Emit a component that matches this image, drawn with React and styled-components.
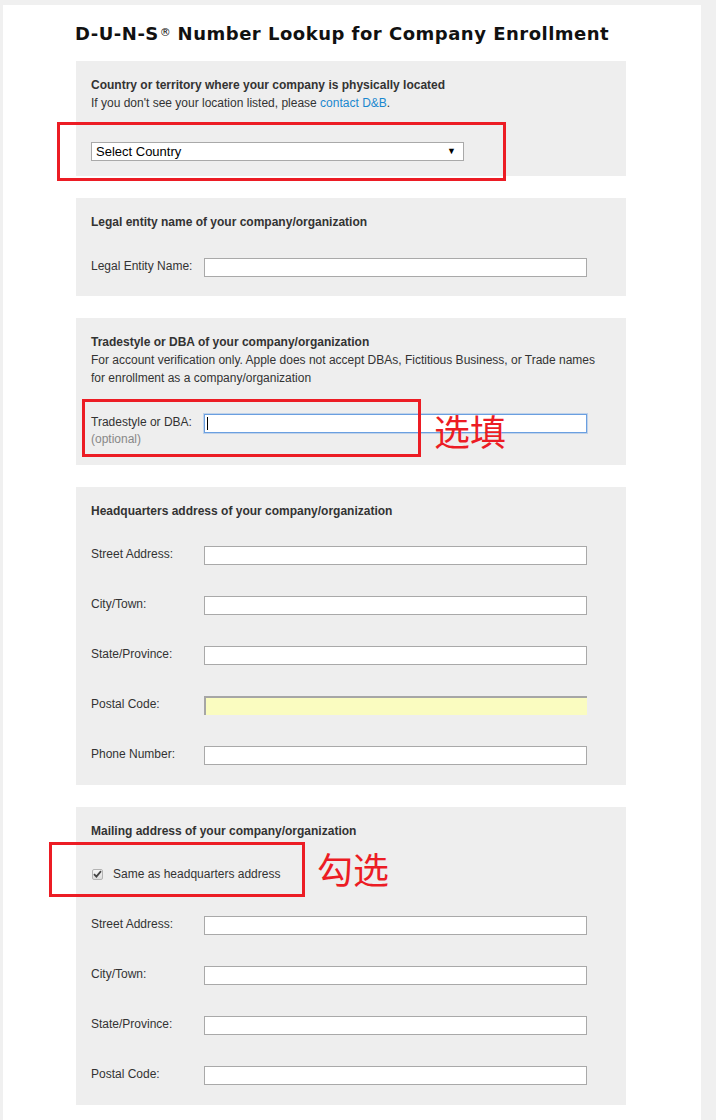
import React from 'react';
import styled, { createGlobalStyle } from 'styled-components';

const Global = createGlobalStyle`
  html, body { margin: 0; padding: 0; background: #f0f0f0; }
  body { font-family: "Liberation Sans", Arial, sans-serif; }
`;

const Page = styled.div`
  position: relative;
  margin: 5px 0 0 3px;
  width: 698px;
  min-height: 1115px;
  background: #fff;
  padding-top: 18px;
  box-sizing: border-box;
`;

const Title = styled.h1`
  margin: 0 0 16px 72px;
  font-family: "DejaVu Sans", sans-serif;
  font-weight: bold;
  font-size: 18px;
  line-height: 22px;
  letter-spacing: 0.5px;
  color: #111;
  white-space: nowrap;
`;

const Reg = styled.span`
  font-size: 11px;
  vertical-align: top;
  position: relative;
  top: -1px;
  font-weight: normal;
  letter-spacing: 0;
  margin-left: 1px;
`;

const Panels = styled.div`
  display: flex;
  flex-direction: column;
  gap: 22px;
  margin-left: 73px;
  width: 550px;
`;

const Panel = styled.section`
  background: #eeeeee;
  padding: 15px 15px ${p => p.$pb}px;
  color: #333;
  font-size: 12px;
  line-height: 18px;
`;

const Heading = styled.div`
  font-weight: bold;
  color: #333;
`;

const Text = styled.div`
  color: #333;
`;

const Link = styled.a`
  color: #1a88cf;
  text-decoration: none;
`;

const Fields = styled.div`
  display: flex;
  flex-direction: column;
  gap: 31px;
  margin-top: ${p => p.$mt}px;
`;

const Row = styled.div`
  display: flex;
  align-items: flex-start;
`;

const Label = styled.div`
  width: 113px;
  flex: none;
  font-size: 12px;
  line-height: 17px;
  color: #333;
`;

const Optional = styled.span`
  display: block;
  color: #888;
`;

const Box = styled.div`
  position: relative;
  width: 383px;
  height: 19px;
  box-sizing: border-box;
  background: ${p => (p.$autofill ? '#fafcc0' : '#fff')};
  border: 1px solid ${p => (p.$focused ? '#6a9fe0' : '#a9a9a9')};
  ${p => p.$focused && 'box-shadow: 0 0 0 1px rgba(106,159,224,0.35);'}
  ${p => p.$autofill && 'border-width: 2px 0 0 2px; border-color: #a6a6a6;'}
`;

const Caret = styled.span`
  position: absolute;
  left: 2px;
  top: 2px;
  width: 1px;
  height: 13px;
  background: #000;
`;

const Select = styled.div`
  margin-top: 30px;
  width: 373px;
  height: 19px;
  box-sizing: border-box;
  border: 1px solid #a9a9a9;
  background: #fff;
  display: flex;
  align-items: center;
  justify-content: space-between;
  padding: 0 7px 0 4px;
  font-size: 13px;
  color: #000;
`;

const Arrow = styled.span`
  font-size: 9px;
  line-height: 1;
`;

const CheckRow = styled.label`
  display: flex;
  align-items: center;
  gap: 10px;
  margin-top: 26px;
  line-height: 16px;
  color: #333;
`;

const Check = styled.span`
  width: 11px;
  height: 11px;
  margin-left: 1px;
  box-sizing: border-box;
  border: 1px solid #b3b3b3;
  border-radius: 2px;
  background: linear-gradient(#f6f6f6, #dcdcdc);
  display: flex;
  align-items: center;
  justify-content: center;
`;

const Mark = styled.div`
  position: absolute;
  left: ${p => p.$x}px;
  top: ${p => p.$y}px;
  width: ${p => p.$w}px;
  height: ${p => p.$h}px;
  box-sizing: border-box;
  border: 3px solid #ec1c24;
  pointer-events: none;
`;

const Note = styled.div`
  position: absolute;
  left: ${p => p.$x}px;
  top: ${p => p.$y}px;
  font-family: "Noto Sans CJK SC", sans-serif;
  font-size: 36px;
  line-height: 1;
  color: #ec1c24;
`;

function Field({ label, optional, focused, autofill }) {
  return (
    <Row>
      <Label>
        {label}
        {optional && <Optional>(optional)</Optional>}
      </Label>
      <Box $focused={focused} $autofill={autofill}>
        {focused && <Caret />}
      </Box>
    </Row>
  );
}

export default function App() {
  return (
    <>
      <Global />
      <Page>
        <Title>
          D-U-N-S<Reg>®</Reg> Number Lookup for Company Enrollment
        </Title>
        <Panels>
          <Panel $pb={15}>
            <Heading>Country or territory where your company is physically located</Heading>
            <Text>
              If you don't see your location listed, please <Link href="#">contact D&amp;B</Link>.
            </Text>
            <Select>
              <span>Select Country</span>
              <Arrow>▼</Arrow>
            </Select>
          </Panel>

          <Panel $pb={19}>
            <Heading>Legal entity name of your company/organization</Heading>
            <Fields $mt={27}>
              <Field label="Legal Entity Name:" />
            </Fields>
          </Panel>

          <Panel $pb={17}>
            <Heading>Tradestyle or DBA of your company/organization</Heading>
            <Text>
              For account verification only. Apple does not accept DBAs, Fictitious Business, or Trade names
              for enrollment as a company/organization
            </Text>
            <Fields $mt={27}>
              <Field label="Tradestyle or DBA:" optional focused />
            </Fields>
          </Panel>

          <Panel $pb={20}>
            <Heading>Headquarters address of your company/organization</Heading>
            <Fields $mt={26}>
              <Field label="Street Address:" />
              <Field label="City/Town:" />
              <Field label="State/Province:" />
              <Field label="Postal Code:" autofill />
              <Field label="Phone Number:" />
            </Fields>
          </Panel>

          <Panel $pb={20}>
            <Heading>Mailing address of your company/organization</Heading>
            <CheckRow>
              <Check>
                <svg width="9" height="8" viewBox="0 0 9 8">
                  <path d="M1 4.2 L3.4 6.6 L8 1.2" fill="none" stroke="#444" strokeWidth="1.8" />
                </svg>
              </Check>
              Same as headquarters address
            </CheckRow>
            <Fields $mt={34}>
              <Field label="Street Address:" />
              <Field label="City/Town:" />
              <Field label="State/Province:" />
              <Field label="Postal Code:" />
            </Fields>
          </Panel>
        </Panels>

        <Mark $x={54} $y={117} $w={449} $h={59} />
        <Mark $x={79} $y={394} $w={339} $h={58} />
        <Note $x={431} $y={407}>选填</Note>
        <Mark $x={46} $y={837} $w={256} $h={55} />
        <Note $x={314} $y={845}>勾选</Note>
      </Page>
    </>
  );
}
